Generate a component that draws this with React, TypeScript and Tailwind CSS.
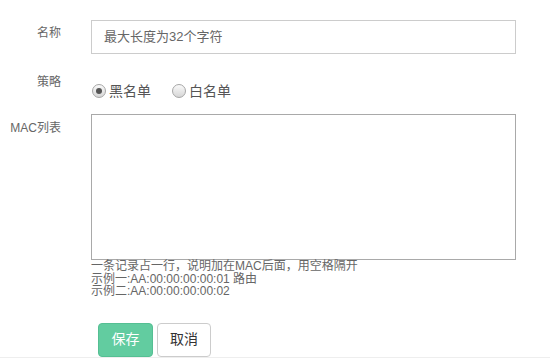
import React from "react";

const font = { fontFamily: '"Liberation Sans", "Noto Sans CJK SC", sans-serif' };

function Radio({ checked, label }: { checked: boolean; label: string }) {
  return (
    <label className="flex items-center">
      <span className="flex h-[14px] w-[14px] items-center justify-center rounded-full border border-[#a6a6a6] bg-gradient-to-b from-[#fafafa] to-[#d6d6d6]">
        {checked && <span className="h-[6px] w-[6px] rounded-full bg-[#555]" />}
      </span>
      <span className="ml-[3px] text-[14px] leading-[18px] text-[#555]">{label}</span>
    </label>
  );
}

export default function App() {
  return (
    <div className="relative h-[358px] w-[550px] bg-white" style={font}>
      <div className="pt-[20px]">
        <div className="flex">
          <div className="mt-[4px] w-[61px] text-right text-[12px] leading-[18px] text-[#666]">名称</div>
          <div className="ml-[30px] flex h-[34px] w-[425px] items-center border border-[#cccccc] pl-[12px] text-[13px] text-[#666]">
            最大长度为32个字符
          </div>
        </div>
        <div className="mt-[19px] flex">
          <div className="w-[61px] text-right text-[12px] leading-[18px] text-[#666]">策略</div>
          <div className="ml-[31px] mt-[9px] flex items-center gap-[21px]">
            <Radio checked label="黑名单" />
            <Radio checked={false} label="白名单" />
          </div>
        </div>
        <div className="mt-[14px] flex">
          <div className="mt-[5px] w-[61px] text-right text-[12px] leading-[18px] text-[#666]">MAC列表</div>
          <div className="ml-[30px]">
            <div className="h-[146px] w-[425px] border border-[#a9a9a9]" />
            <div className="text-[12px] leading-[12.5px] text-[#666]">
              <div>一条记录占一行，说明加在MAC后面，用空格隔开</div>
              <div>示例一:AA:00:00:00:00:01 路由</div>
              <div>示例二:AA:00:00:00:00:02</div>
            </div>
          </div>
        </div>
        <div className="ml-[98px] mt-[25px] flex gap-[4px]">
          <button className="h-[34px] w-[55px] rounded-[4px] border border-[#55bf93] bg-[#62cca0] text-[14px] text-white">
            保存
          </button>
          <button className="h-[34px] w-[54px] rounded-[4px] border border-[#cccccc] bg-white text-[14px] text-[#333]">
            取消
          </button>
        </div>
      </div>
      <div className="absolute bottom-0 left-0 h-[1px] w-full bg-[#eeeeee]" />
    </div>
  );
}
